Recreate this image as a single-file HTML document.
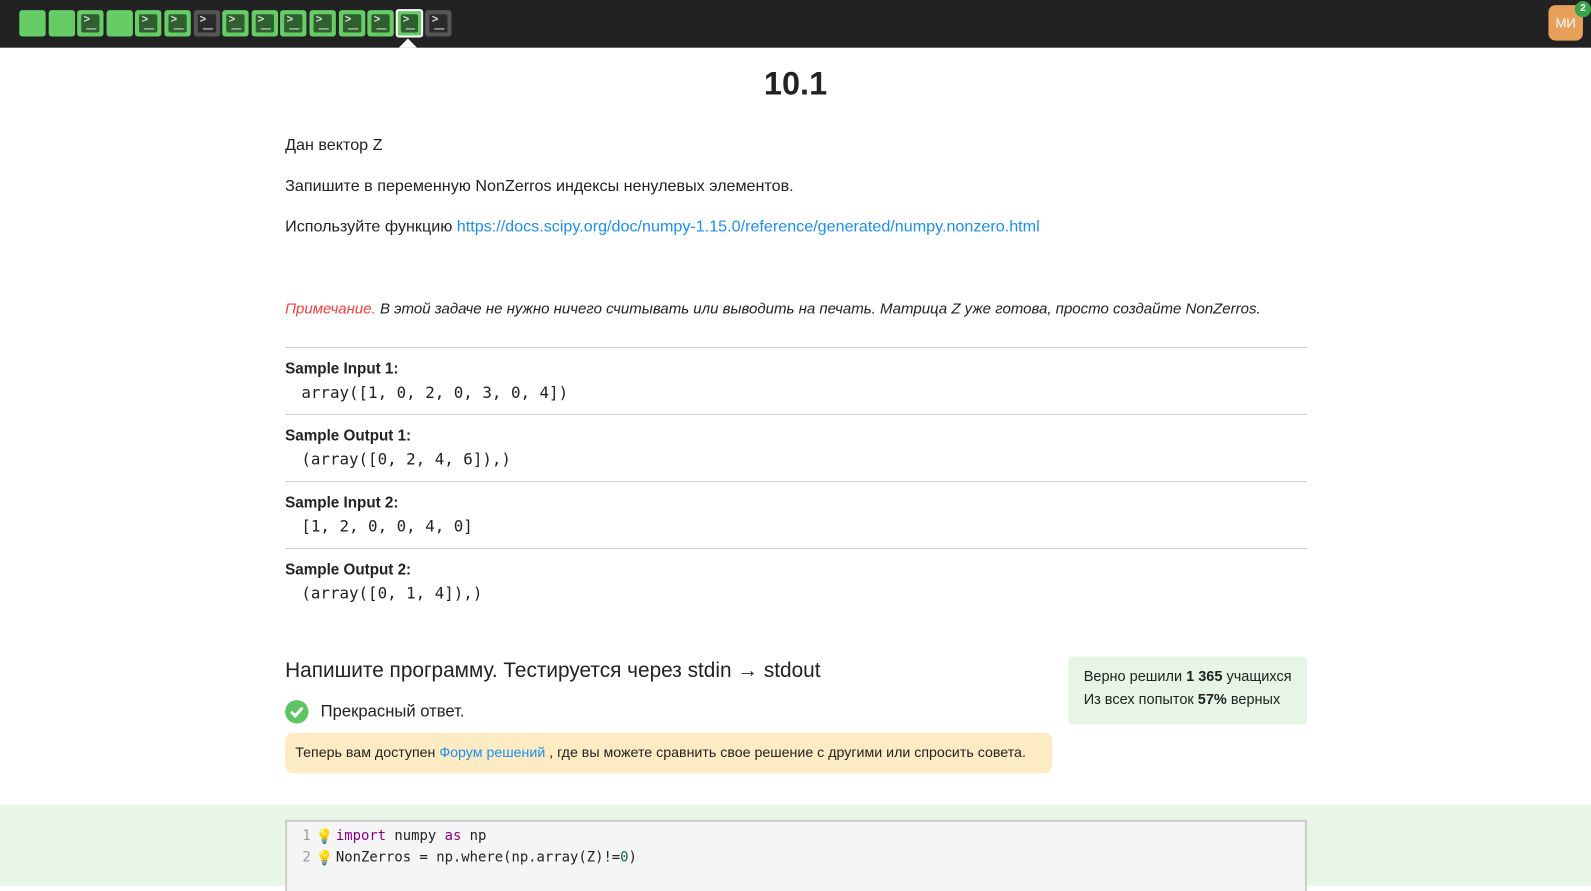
<!DOCTYPE html>
<html><head><meta charset="utf-8">
<style>
*{box-sizing:border-box;margin:0;padding:0}
html,body{width:1591px;height:873px;overflow:hidden;background:#fff}
#w{position:absolute;left:0;top:0;width:1568px;height:861px;transform:scale(1.0147);transform-origin:0 0;font-family:"Liberation Sans",Roboto,sans-serif;color:#222}
.top{position:absolute;left:0;top:0;width:1568px;height:47px;background:#222}
.sq{position:absolute;top:10px;width:26px;height:26px;border-radius:3px;background:#66cc66}
.sq.g{background:#555}
.sq.sel{border:2px solid #fff;top:9px;height:28px;width:27px}
.sq .in{position:absolute;left:4px;top:4px;right:4px;bottom:4px;background:#2f5f2f;border-radius:2px;color:#ddd;font:bold 11px "Liberation Mono",monospace;padding-left:2px;line-height:13px}
.sq.g .in{background:#2a2a2a}
.sq .in:after{content:"";position:absolute;left:5px;right:3px;bottom:3px;height:1.5px;background:#ddd}
.abs{position:absolute}
.t{font-size:15.9px;color:#222}
.mono{font-family:"DejaVu Sans Mono","Liberation Mono",monospace;font-size:15.6px}
.hr{position:absolute;left:281px;width:1007px;height:1px;background:#ccc}
.b{font-weight:bold;font-size:15px}
a{color:#1a8ff0;text-decoration:none}
</style></head><body><div id="w">
<div class="top"></div>
<div id="sqs"></div>
<div class="abs" style="left:393px;top:38px;width:0;height:0;border-left:9px solid transparent;border-right:9px solid transparent;border-bottom:9px solid #fff"></div>
<div class="abs" style="left:1526px;top:5px;width:34px;height:35px;background:#e6a05a;border-radius:7px;color:#fff;font-size:13px;text-align:center;line-height:35px">МИ</div>
<div class="abs" style="left:1552px;top:1px;width:16px;height:16px;background:#3aa34a;border-radius:50%;color:#fff;font-size:10px;font-weight:bold;text-align:center;line-height:16px">2</div>

<div class="abs" style="left:0;top:64px;width:1568px;text-align:center;font-size:32px;font-weight:bold;color:#222">10.1</div>
<div class="abs t" style="left:281px;top:135px">Дан вектор Z</div>
<div class="abs t" style="left:281px;top:175px">Запишите в переменную NonZerros индексы ненулевых элементов.</div>
<div class="abs t" style="left:281px;top:215px">Используйте функцию <a>https://docs.scipy.org/doc/numpy-1.15.0/reference/generated/numpy.nonzero.html</a></div>
<div class="abs" style="left:281px;top:297px;font-style:italic;font-size:14.8px"><span style="color:#f04040">Примечание.</span> В этой задаче не нужно ничего считывать или выводить на печать. Матрица Z уже готова, просто создайте NonZerros.</div>

<div class="hr" style="top:342px"></div>
<div class="abs b" style="left:281px;top:355px">Sample Input 1:</div>
<div class="abs mono" style="left:297px;top:378px">array([1, 0, 2, 0, 3, 0, 4])</div>
<div class="hr" style="top:408px"></div>
<div class="abs b" style="left:281px;top:421px">Sample Output 1:</div>
<div class="abs mono" style="left:297px;top:444px">(array([0, 2, 4, 6]),)</div>
<div class="hr" style="top:474px"></div>
<div class="abs b" style="left:281px;top:487px">Sample Input 2:</div>
<div class="abs mono" style="left:297px;top:510px">[1, 2, 0, 0, 4, 0]</div>
<div class="hr" style="top:540px"></div>
<div class="abs b" style="left:281px;top:553px">Sample Output 2:</div>
<div class="abs mono" style="left:297px;top:576px">(array([0, 1, 4]),)</div>

<div class="abs" style="left:281px;top:649px;font-size:20.5px;color:#222">Напишите программу. Тестируется через stdin → stdout</div>
<div class="abs" style="left:281px;top:690px;width:23px;height:23px;border-radius:50%;background:#5cc461">
<svg width="23" height="23" viewBox="0 0 23 23"><path d="M6 11.5l4 4 7-8" stroke="#fff" stroke-width="3" fill="none"/></svg></div>
<div class="abs" style="left:316px;top:692px;font-size:16.4px">Прекрасный ответ.</div>
<div class="abs" style="left:281px;top:722px;width:756px;height:40px;background:#fdebc3;border-radius:8px;font-size:14px;padding:11px 10px;color:#222">Теперь вам доступен <a>Форум решений</a> , где вы можете сравнить свое решение с другими или спросить совета.</div>
<div class="abs" style="left:1053px;top:647px;width:235px;height:67px;background:#e6f5e6;border-radius:3px;font-size:14.3px;line-height:23px;padding:9px 15px;white-space:nowrap">Верно решили <b>1 365</b> учащихся<br>Из всех попыток <b>57%</b> верных</div>

<div class="abs" style="left:0;top:793px;width:1568px;height:80px;background:#e8f6e8"></div>
<div class="abs" style="left:281px;top:808px;width:1007px;height:70px;background:#f5f5f5;border:2px solid #ccc;border-bottom:none"></div>
<div class="abs mono" style="left:298px;top:814px;font-size:13.7px;line-height:21px;color:#999">1<br>2</div>
<div class="abs" style="left:311px;top:814px;font-size:14px;line-height:21px">💡<br>💡</div>
<div class="abs mono" style="left:331px;top:814px;font-size:13.7px;line-height:21px;color:#222"><span style="color:#808">import</span> numpy <span style="color:#808">as</span> np<br>NonZerros = np.where(np.array(Z)!=<span style="color:#164">0</span>)</div>
</div>
<script>
var types=["s","s","i","s","i","i","g","i","i","i","i","i","i","S","g"];
var h="";
types.forEach(function(t,i){
 var x=19+i*28.6;
 if(t=="s")h+='<div class="sq" style="left:'+x+'px"></div>';
 else if(t=="g")h+='<div class="sq g" style="left:'+x+'px"><div class="in">&gt;</div></div>';
 else if(t=="S")h+='<div class="sq sel" style="left:'+(x-1)+'px"><div class="in" style="left:3px;top:3px;right:3px;bottom:3px">&gt;</div></div>';
 else h+='<div class="sq" style="left:'+x+'px"><div class="in">&gt;</div></div>';
});
document.getElementById("sqs").innerHTML=h;
</script>
</body></html>
